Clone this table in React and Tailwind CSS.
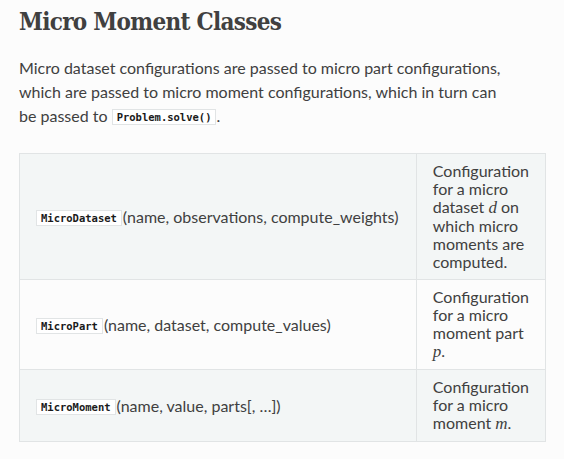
const rows = [
  {
    name: "MicroDataset",
    args: "(name, observations, compute_weights)",
    desc: (
      <>
        Configuration for a micro dataset <M>d</M> on which micro moments are computed.
      </>
    ),
    shaded: true,
  },
  {
    name: "MicroPart",
    args: "(name, dataset, compute_values)",
    desc: (
      <>
        Configuration for a micro moment part <M>p</M>.
      </>
    ),
    shaded: false,
  },
  {
    name: "MicroMoment",
    args: "(name, value, parts[, …])",
    desc: (
      <>
        Configuration for a micro moment <M>m</M>.
      </>
    ),
    shaded: true,
  },
]

function M({ children }) {
  return <i className="font-['Liberation_Serif',serif] text-[17px]">{children}</i>
}

function Code({ children }) {
  return (
    <code className="inline-block border border-[#e1e4e5] bg-white px-[4px] align-[1px] font-['DejaVu_Sans_Mono',monospace] text-[10.5px] leading-[14px] font-bold text-[#1a1a1a]">
      {children}
    </code>
  )
}

export default function App() {
  return (
    <div className="min-h-screen bg-[#fcfcfc] px-[19px] pt-[6px] font-['Lato',sans-serif] text-[#404040]">
      <h2 className="font-['DejaVu_Serif_Condensed','DejaVu_Serif',serif] text-[24px] leading-[32px] font-bold tracking-[-0.7px] [font-stretch:condensed] text-[#404040]">
        Micro Moment Classes
      </h2>

      <p className="mt-[18px] w-[490px] text-[16px] leading-[24px]">
        Micro dataset configurations are passed to micro part configurations, which are passed to micro moment
        configurations, which in turn can be passed to <Code>Problem.solve()</Code>.
      </p>

      <table className="mt-[25px] w-[527px] border-collapse border border-[#e1e4e5]">
        <tbody>
          {rows.map((r) => (
            <tr key={r.name} className={r.shaded ? "bg-[#f3f6f6]" : "bg-[#fcfcfc]"}>
              <td className="w-[397px] border border-[#e1e4e5] px-[16px] py-[8px] align-middle text-[16px] leading-[18px] whitespace-nowrap">
                <Code>{r.name}</Code>
                <span className="ml-[1px]">{r.args}</span>
              </td>
              <td className="border border-[#e1e4e5] px-[16px] py-[8px] align-top text-[16px] leading-[18px]">
                {r.desc}
              </td>
            </tr>
          ))}
        </tbody>
      </table>
    </div>
  )
}
